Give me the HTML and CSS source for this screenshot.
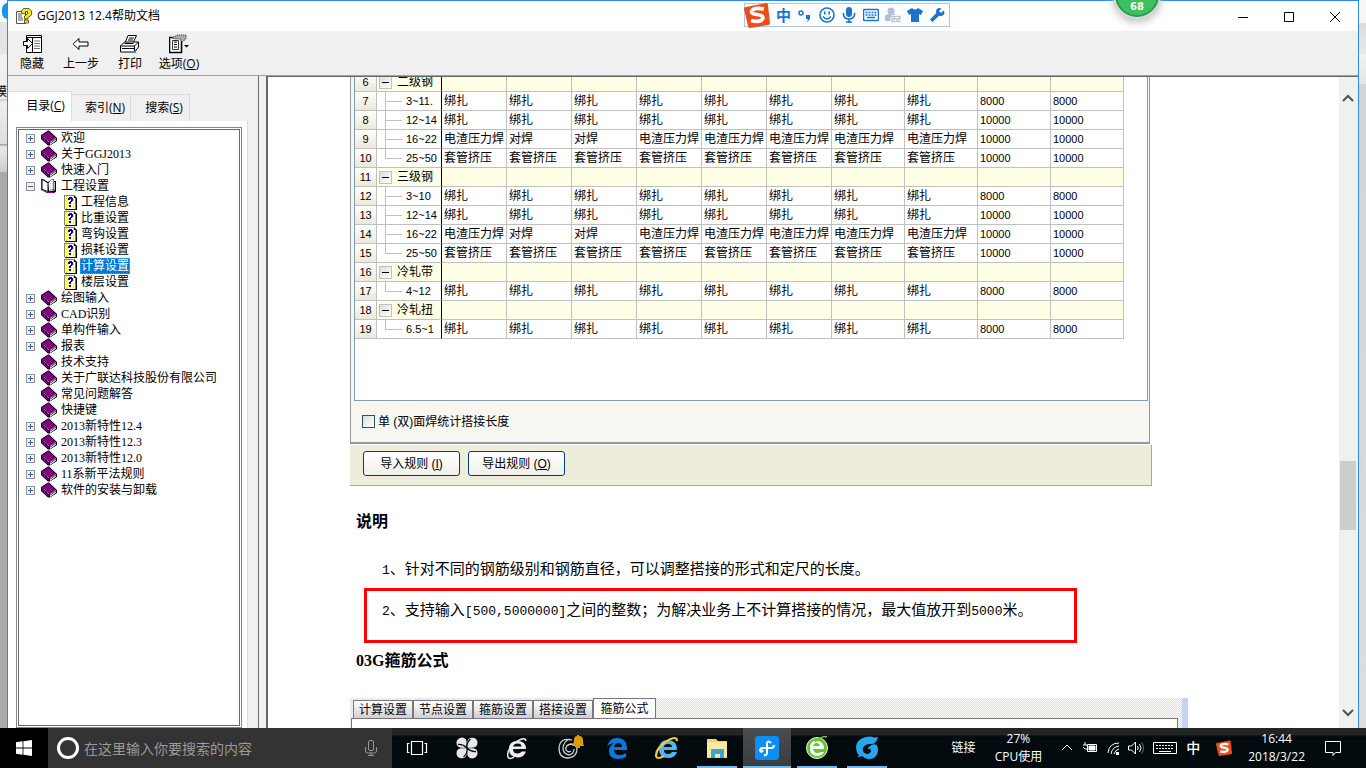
FILE: index.html
```html
<!DOCTYPE html>
<html lang="zh-CN">
<head>
<meta charset="utf-8">
<title>GGJ2013 12.4帮助文档</title>
<link rel="stylesheet" href="styles.css">
</head>
<body>
<svg class="defs" aria-hidden="true">
  <symbol id="book" viewBox="0 0 16 16">
    <path d="M0 5 7 .500h1L16 8v3l-7 4.500H7L0 9z" fill="#000"/>
    <path d="M1 5.200 7.500 1 15 8.200 8.500 12.800z" fill="#800080"/>
    <path d="M.700 6.500 8 13.500v1.500L.700 8.800z" fill="#800080"/>
    <path d="M9 13.500 15 9.500v1L9 15z" fill="#fff"/>
    <path d="M1.500 6 8.500 12.500" stroke="#ddd" stroke-dasharray="1 1" fill="none"/>
    <path d="M9 12.500 15 8.500" stroke="#aaa" fill="none"/>
  </symbol>
  <symbol id="open" viewBox="0 0 16 16">
    <path d="M1 1h1l5 3 4-3h2v2h2v11H7L1 12z" fill="#000"/>
    <path d="M0 1h1v11l6 2h7v1H6L0 12z" fill="#800080"/>
    <path d="M1.500 2 6.500 5v8L1.500 11z" fill="#fff"/>
    <path d="M7.500 5l3-3.500h2v9.500l-4.500 2z" fill="#fff"/>
    <path d="M9.500 5v7M11.500 3v8" stroke="#e8d800" stroke-dasharray="1 1"/>
    <path d="M13.500 4v8l-5 1" stroke="#bbb" fill="none"/>
  </symbol>
  <symbol id="topic" viewBox="0 0 13 15">
    <path d="M1 0h9l3 3v12H1z" fill="#000"/>
    <path d="M0 0h10v1H1v13H0z" fill="#808080"/>
    <path d="M1 1h9v2h1.500v11H1z" fill="#fffbc0"/>
    <path d="M2.500 1v13M9.500 2v12" stroke="#ffe800" stroke-dasharray="1 1"/>
    <path d="M4 5V3h1V2h3v1h1v3H8v1H7v2H5V7h1V6h1V4H6v1zM5 10h2v2H5z" fill="#0000e0"/>
  </symbol>
  <symbol id="sogou" viewBox="0 0 26 26">
    <path d="M2 5 22 1q2 0 2 2l2 18q0 2-2 2L6 26q-2 0-2-2L0 7q0-2 2-2z" fill="#ee4d1b"/>
    <path d="M20 7Q9 5 7.500 9.500C7 14 19.500 11 19 16Q17 21 7 18.500" fill="none" stroke="#fff" stroke-width="3.600"/>
  </symbol>
</svg>

<div class="desktop">
  <div class="behind behind-left"><span class="behind-dot"></span><span class="behind-char">模</span></div>

  <main class="window">
    <header class="titlebar">
      <svg class="app-icon" viewBox="0 0 16 16"><path d="M.500 3.500h9v12h-9z" fill="#fff" stroke="#555"/><path d="M2 6h4M2 8h4M2 10h5M2 12h5" stroke="#555"/><path d="M5.500 5V3l2-2.500h5.500l2.500 2.500v4l-3.500 2.500v1.500H8.500V8l3-2V3.500h-2V6zM8.500 12h4v3h-4z" fill="#ffe800" stroke="#222" stroke-width=".7"/></svg>
      <h1 class="title">GGJ2013 12.4帮助文档</h1>
      <div class="controls">
        <button aria-label="最小化"><svg viewBox="0 0 12 12"><path d="M1 6.500h10"/></svg></button>
        <button aria-label="最大化"><svg viewBox="0 0 12 12"><path d="M1.500 1.500h9v9h-9z"/></svg></button>
        <button aria-label="关闭"><svg viewBox="0 0 12 12"><path d="m1 1 10 10M11 1 1 11"/></svg></button>
      </div>
    </header>

    <nav class="toolbar">
      <button><svg viewBox="0 0 20 20"><path d="M4.500 1.500h15v17h-15z" fill="#fff" stroke="#000"/><path d="M4 3.500h16M10.500 4v15" stroke="#000"/><path d="M12 7h6M12 9.500h6M12 12h6M12 14.500h6" stroke="#777"/><path d="M1.500 7.500h4v-3l5 5-5 5v-3h-4z" fill="#fff" stroke="#000"/></svg><span>隐藏</span></button>
      <button><svg viewBox="0 0 20 20"><path d="m2 10 6-5.500v3.500h9v4H8v3.500z" fill="#fff" stroke="#000"/><path d="M2 9h1v2H2z" fill="#d00"/></svg><span>上一步</span></button>
      <button><svg viewBox="0 0 20 20"><path d="M5 9 8 1.500h8.500L13 9z" fill="#fff" stroke="#000"/><path d="M9 4h5M8 6h5" stroke="#000"/><path d="m.500 12 4-4h14v5l-4 5H.500z" fill="#fff" stroke="#000"/><path d="M.500 12h14v6M14.500 12l4-4M2 14.500h12" fill="none" stroke="#000"/><path d="m4 10 1-1h9l-1 1z"/><path d="M14 17h2v2h-2z" fill="#00bcd4"/></svg><span>打印</span></button>
      <button><svg viewBox="0 0 20 20"><path d="M.500 3.500h12v15H.500z" fill="#fff" stroke="#000" stroke-width="1.600"/><path d="M3.500 6.500h6v9h-6z" fill="none" stroke="#333"/><path d="M5 8h3M5 10.500h3M5 13h3" stroke="#000"/><path d="m3 4 5-3h9v4l-4 3-2-3H6z" fill="#aaa" stroke="#333" stroke-dasharray="1 1"/><path d="M15 11h5l-2.500 2.500z"/></svg><span>选项(<u>O</u>)</span></button>
    </nav>

    <div class="panes">
      <aside class="sidebar">
        <div class="side-tabs" role="tablist">
          <button class="side-tab active" role="tab" aria-selected="true">目录(<u>C</u>)</button>
          <button class="side-tab" role="tab">索引(<u>N</u>)</button>
          <button class="side-tab" role="tab">搜索(<u>S</u>)</button>
        </div>
        <div class="side-page">
          <ul class="tree">
            <li><button class="exp" aria-label="展开"></button><svg><use href="#book"/></svg><a href="#">欢迎</a></li>
            <li><button class="exp" aria-label="展开"></button><svg><use href="#book"/></svg><a href="#">关于GGJ2013</a></li>
            <li><button class="exp" aria-label="展开"></button><svg><use href="#book"/></svg><a href="#">快速入门</a></li>
            <li><button class="exp minus" aria-label="折叠"></button><svg><use href="#open"/></svg><a href="#">工程设置</a></li>
            <li class="child"><svg><use href="#topic"/></svg><a href="#">工程信息</a></li>
            <li class="child"><svg><use href="#topic"/></svg><a href="#">比重设置</a></li>
            <li class="child"><svg><use href="#topic"/></svg><a href="#">弯钩设置</a></li>
            <li class="child"><svg><use href="#topic"/></svg><a href="#">损耗设置</a></li>
            <li class="child"><svg><use href="#topic"/></svg><a href="#" class="selected">计算设置</a></li>
            <li class="child"><svg><use href="#topic"/></svg><a href="#">楼层设置</a></li>
            <li><button class="exp" aria-label="展开"></button><svg><use href="#book"/></svg><a href="#">绘图输入</a></li>
            <li><button class="exp" aria-label="展开"></button><svg><use href="#book"/></svg><a href="#">CAD识别</a></li>
            <li><button class="exp" aria-label="展开"></button><svg><use href="#book"/></svg><a href="#">单构件输入</a></li>
            <li><button class="exp" aria-label="展开"></button><svg><use href="#book"/></svg><a href="#">报表</a></li>
            <li class="leaf"><svg><use href="#book"/></svg><a href="#">技术支持</a></li>
            <li><button class="exp" aria-label="展开"></button><svg><use href="#book"/></svg><a href="#">关于广联达科技股份有限公司</a></li>
            <li class="leaf"><svg><use href="#book"/></svg><a href="#">常见问题解答</a></li>
            <li class="leaf"><svg><use href="#book"/></svg><a href="#">快捷键</a></li>
            <li><button class="exp" aria-label="展开"></button><svg><use href="#book"/></svg><a href="#">2013新特性12.4</a></li>
            <li><button class="exp" aria-label="展开"></button><svg><use href="#book"/></svg><a href="#">2013新特性12.3</a></li>
            <li><button class="exp" aria-label="展开"></button><svg><use href="#book"/></svg><a href="#">2013新特性12.0</a></li>
            <li><button class="exp" aria-label="展开"></button><svg><use href="#book"/></svg><a href="#">11系新平法规则</a></li>
            <li><button class="exp" aria-label="展开"></button><svg><use href="#book"/></svg><a href="#">软件的安装与卸载</a></li>
          </ul>
        </div>
      </aside>
      <div class="splitter"></div>

      <article class="doc">
        <div class="frame">
          <div class="grid-box">
            <table class="grid">
              <colgroup><col class="c-no"><col class="c-cell"><col class="c-cell"><col class="c-cell"><col class="c-cell"><col class="c-cell"><col class="c-cell"><col class="c-cell"><col class="c-wide"><col class="c-wide"><col class="c-wide"><col class="c-wide"></colgroup>
              <tbody>
              <tr class="group"><th>6</th><td><button class="fold" aria-label="折叠"></button>二级钢</td><td></td><td></td><td></td><td></td><td></td><td></td><td></td><td></td><td></td><td></td></tr>
              <tr><th>7</th><td class="sub">3~11.</td><td>绑扎</td><td>绑扎</td><td>绑扎</td><td>绑扎</td><td>绑扎</td><td>绑扎</td><td>绑扎</td><td>绑扎</td><td>8000</td><td>8000</td></tr>
              <tr><th>8</th><td class="sub">12~14</td><td>绑扎</td><td>绑扎</td><td>绑扎</td><td>绑扎</td><td>绑扎</td><td>绑扎</td><td>绑扎</td><td>绑扎</td><td>10000</td><td>10000</td></tr>
              <tr><th>9</th><td class="sub">16~22</td><td>电渣压力焊</td><td>对焊</td><td>对焊</td><td>电渣压力焊</td><td>电渣压力焊</td><td>电渣压力焊</td><td>电渣压力焊</td><td>电渣压力焊</td><td>10000</td><td>10000</td></tr>
              <tr><th>10</th><td class="sub last">25~50</td><td>套管挤压</td><td>套管挤压</td><td>套管挤压</td><td>套管挤压</td><td>套管挤压</td><td>套管挤压</td><td>套管挤压</td><td>套管挤压</td><td>10000</td><td>10000</td></tr>
              <tr class="group"><th>11</th><td><button class="fold" aria-label="折叠"></button>三级钢</td><td></td><td></td><td></td><td></td><td></td><td></td><td></td><td></td><td></td><td></td></tr>
              <tr><th>12</th><td class="sub">3~10</td><td>绑扎</td><td>绑扎</td><td>绑扎</td><td>绑扎</td><td>绑扎</td><td>绑扎</td><td>绑扎</td><td>绑扎</td><td>8000</td><td>8000</td></tr>
              <tr><th>13</th><td class="sub">12~14</td><td>绑扎</td><td>绑扎</td><td>绑扎</td><td>绑扎</td><td>绑扎</td><td>绑扎</td><td>绑扎</td><td>绑扎</td><td>10000</td><td>10000</td></tr>
              <tr><th>14</th><td class="sub">16~22</td><td>电渣压力焊</td><td>对焊</td><td>对焊</td><td>电渣压力焊</td><td>电渣压力焊</td><td>电渣压力焊</td><td>电渣压力焊</td><td>电渣压力焊</td><td>10000</td><td>10000</td></tr>
              <tr><th>15</th><td class="sub last">25~50</td><td>套管挤压</td><td>套管挤压</td><td>套管挤压</td><td>套管挤压</td><td>套管挤压</td><td>套管挤压</td><td>套管挤压</td><td>套管挤压</td><td>10000</td><td>10000</td></tr>
              <tr class="group"><th>16</th><td><button class="fold" aria-label="折叠"></button>冷轧带</td><td></td><td></td><td></td><td></td><td></td><td></td><td></td><td></td><td></td><td></td></tr>
              <tr><th>17</th><td class="sub last">4~12</td><td>绑扎</td><td>绑扎</td><td>绑扎</td><td>绑扎</td><td>绑扎</td><td>绑扎</td><td>绑扎</td><td>绑扎</td><td>8000</td><td>8000</td></tr>
              <tr class="group"><th>18</th><td><button class="fold" aria-label="折叠"></button>冷轧扭</td><td></td><td></td><td></td><td></td><td></td><td></td><td></td><td></td><td></td><td></td></tr>
              <tr><th>19</th><td class="sub last">6.5~1</td><td>绑扎</td><td>绑扎</td><td>绑扎</td><td>绑扎</td><td>绑扎</td><td>绑扎</td><td>绑扎</td><td>绑扎</td><td>8000</td><td>8000</td></tr>
              </tbody>
            </table>
          </div>
          <label class="check"><input type="checkbox">单 (双)面焊统计搭接长度</label>
        </div>
        <div class="actions">
          <button>导入规则 (<u>I</u>)</button>
          <button>导出规则 (<u>O</u>)</button>
        </div>

        <h2 class="note-title">说明</h2>
        <p class="note"><span class="num">1</span>、针对不同的钢筋级别和钢筋直径，可以调整搭接的形式和定尺的长度。</p>
        <p class="note boxed"><span class="num">2</span>、支持输入<span class="num">[500,5000000]</span>之间的整数；为解决业务上不计算搭接的情况，最大值放开到<span class="num">5000</span>米。</p>
        <h2 class="formula-title">03G箍筋公式</h2>

        <div class="shot">
          <div class="shot-tabs">
            <button>计算设置</button><button>节点设置</button><button>箍筋设置</button><button>搭接设置</button><button class="active">箍筋公式</button>
          </div>
          <div class="shot-page"></div>
        </div>
      </article>
      <div class="scrollbar">
        <svg viewBox="0 0 12 8"><path d="M1 7l5-5 5 5"/></svg>
        <div class="track"><div class="thumb"></div></div>
        <svg viewBox="0 0 12 8"><path d="M1 1l5 5 5-5"/></svg>
      </div>
    </div>
  </main>

  <div class="behind behind-right"></div>

  <div class="ime">
    <svg class="ime-logo"><use href="#sogou"/></svg>
    <b>中</b>
    <svg viewBox="0 0 16 16"><circle cx="4" cy="6" r="2" fill="none" stroke="#1b74c9" stroke-width="1.500"/><path d="M9 8h4v4l-3 3 1-3H9z"/></svg>
    <svg viewBox="0 0 16 16"><circle cx="8" cy="8" r="7" fill="none" stroke="#1b74c9" stroke-width="1.600"/><path d="M5 4.500h1.600v3H5zM9.400 4.500H11v3H9.400z"/><path d="M4 9.500q4 5 8 0" fill="none" stroke="#1b74c9" stroke-width="1.400"/></svg>
    <svg viewBox="0 0 16 16"><rect x="5" y="0" width="6" height="10" rx="3"/><path d="M2.500 6v2q1 4 5.500 4t5.500-4V6M8 12v4M5 15h6" fill="none" stroke="#1b74c9" stroke-width="1.600"/></svg>
    <svg viewBox="0 0 16 16"><rect x=".5" y="2.500" width="15" height="11" rx="1" fill="none" stroke="#1b74c9" stroke-width="1.500"/><path d="M2.500 5.500h11M2.500 8h11" stroke="#1b74c9" stroke-width="1.500" stroke-dasharray="2 1"/><path d="M4 10.500h8" stroke="#1b74c9" stroke-width="1.500"/></svg>
    <svg viewBox="0 0 16 16" class="dim"><circle cx="6" cy="4" r="3.500"/><path d="M0 14V9q1-2 4-2h6v7z"/><path d="M6.500 9.500H10V12H7v2.500h3.500M11.500 9.500H15V12h-3v2.500h3.500" fill="none" stroke="#fff" stroke-width="3"/><path d="M6.500 9.500H10V12H7v2.500h3.500M11.500 9.500H15V12h-3v2.500h3.500" fill="none" stroke="#b3bfd4" stroke-width="1.300"/></svg>
    <svg viewBox="0 0 16 16"><path d="M5 1q3 3 6 0l5 3-2 4-2-1v8H4V7L2 8 0 4z"/></svg>
    <svg viewBox="0 0 16 16"><path d="M14.500 3.500 12 6l-2-2 2.500-2.500Q8 0 7 4l.3 2L1 12.500 3.500 15 10 8.700q5 1 5.500-3.200z"/></svg>
  </div>
  <div class="ball">68</div>
</div>

<footer class="taskbar">
  <button class="start" aria-label="开始"><svg viewBox="0 0 16 16"><path d="M0 2.200 6.600 1.300v6.300H0zM7.400 1.200 16 0v7.600H7.400zM0 8.400h6.600v6.300L0 13.800zM7.400 8.400H16V16l-8.600-1.200z"/></svg></button>
  <label class="search">
    <span class="cortana"></span>
    <input type="text" placeholder="在这里输入你要搜索的内容" aria-label="搜索">
    <svg class="mic" viewBox="0 0 12 16"><rect x="3.500" y=".5" width="5" height="10" rx="1.500"/><path d="M.500 7v4q0 2 2 2h7q2 0 2-2V7M6 13v3M3 15.500h6"/></svg>
  </label>
  <div class="apps">
    <button aria-label="任务视图"><svg viewBox="0 0 24 24"><path d="M6.500 5.500h11v13h-11zM4.500 7.500h-2v9h2M19.500 7.500h2v9h-2" fill="none" stroke="#fff" stroke-width="1.200"/></svg></button>
    <button aria-label="花瓣"><svg viewBox="0 0 24 24" fill="#e8e8e8"><path d="M11.700 11.700H6Q1 11 1.500 6q1-4 5.500-4.500 5 .5 4.700 6zM12.300 11.700V6q.7-5 6.200-4.200 4 1 4 5 0 5-6 4.900zM12.300 12.300H18q5 .7 4.500 5.700-1 4-5.500 4.500-5-.5-4.700-6zM11.700 12.300V18q-.7 5-6.200 4.200-4-1-4-5 0-5 6-4.900z"/><path d="M3 8.500q5-.5 9 3.500-1-5 3.500-9M21 15.500q-5 .5-9-3.500 1 5-3.500 9" fill="none" stroke="#071015" stroke-width="1.300"/></svg></button>
    <button aria-label="浏览器"><svg viewBox="0 0 24 24"><path d="M21 13H8q0 4.500 4.500 4.500 3 0 4-2H21q-2 6-8.500 6Q4 21 4 13t8.500-8q8.500 0 8.500 8zM16.500 10.500q0-3-4-3t-4.500 3z" fill="#eee" fill-rule="evenodd"/><path d="M21 5q-1-5-10 1Q1 14 3 21q2 3 6 0" fill="none" stroke="#eee" stroke-width="1.500"/></svg></button>
    <button aria-label="广联达通知"><svg class="wide" viewBox="0 0 28 26"><path d="M16 5Q4 2 3 13q0 10 9 10 9-1 9-9-1-5-6-5-6 1-5 6 2 3 5 1M14 4Q7 7 7 13q0 6 6 7 5-1 5-6" fill="none" stroke="#ccc" stroke-width="1.300"/><path d="M16 11q2-2 2-6 0-4 3-4V0h2v1q4 0 4 4 0 4 1 6zM20 11h4v2h-4z" fill="#dc9d08"/></svg></button>
    <button aria-label="Edge"><svg viewBox="0 0 24 24"><path d="M2 11Q4 2 12 2q9 0 10 9v3H9q0 5 6 5 3 0 6-2v4q-3 2-8 2-9 0-9-8 0-5 5-8-6 1-7 4zm7 0h8q0-4-4-4-3 0-4 4z" fill="#0a78dc" fill-rule="evenodd"/></svg></button>
    <button aria-label="IE"><svg viewBox="0 0 24 24"><path d="M22 14H9q0 4 4 4 3 0 4-2h5q-2 6-9 6-9 0-9-9t9-9q9 0 9 10zm-5-3q0-3-4-3t-4 3z" fill="#4eb6f4" fill-rule="evenodd"/><path d="M22 5Q22-1 12 5 1 12 1 20q1 4 8 0" fill="none" stroke="#f3c82d" stroke-width="2.200"/></svg></button>
    <button class="running" aria-label="文件资源管理器"><svg viewBox="0 0 24 24"><path d="M2 3h9l2 2h9v17H2z" fill="#f3d276"/><path d="M2 6h20v15H2z" fill="#ffe79b"/><path d="M6 13h13v9h-4v-4h-5v4H6z" fill="#35a5dc"/></svg></button>
    <button class="running current" aria-label="帮助"><svg viewBox="0 0 24 24"><rect width="24" height="24" rx="3" fill="#0a8ff4"/><path d="M16 7q-3-3-4 0v10q-.5 3-3 2M5 15q0-3 3-3h8q3 0 3-3M5 15q2 2 3-1" fill="none" stroke="#fff" stroke-width="2"/></svg></button>
    <button class="running" aria-label="安全浏览器"><svg viewBox="0 0 24 24"><circle cx="12" cy="12" r="10.500" fill="#62c62c" stroke="#e8f7dc"/><path d="M19 13H8q1 4 4 4 3 0 4-1h3q-2 4-7 4-7 0-7-8t7-7q7 0 7 8zm-4-3q-1-3-3.500-3T8 10z" fill="#fff" fill-rule="evenodd"/><path d="M22 1q-4-2-12 5" stroke="#6cc93d" stroke-width="1.500" fill="none"/></svg></button>
    <button class="running" aria-label="广联达"><svg viewBox="0 0 24 24"><path d="M23 1q-3 1-7-.5Q2 1 1 11q0 5 3 8-1 2-2 2 4 0 5-1 5 5 12 2 6-5 3-13-4-2-7 1l-3 3q4-1 4 2-1 3-4 3-5-1-4-6 2-4 7-4 6 1 8-7z" fill="#25a7ee"/></svg></button>
  </div>
  <div class="tray">
    <span class="links">链接</span>
    <span class="stack cpu">27%<br>CPU使用</span>
    <svg class="w12" viewBox="0 0 12 16"><path d="m1 10 5-5 5 5"/></svg>
    <svg class="w16" viewBox="0 0 16 16"><path d="M5.500 4.500h9v7h-9zM1 5h4M3 2v3M1 7l2 2h2" /><path d="M7 6h6v4H7z" fill="#fff"/></svg>
    <svg class="w12" viewBox="0 0 12 16"><path d="M1 13Q2 3 12 3M4 14q1-7 8-8M7 14q1-4 5-5"/><path d="M9 12h3v3H9z" fill="#fff" stroke="none"/></svg>
    <svg class="w16" viewBox="0 0 16 16"><path d="M.500 6v4h3l4 4V2l-4 4zM9.500 6q1.500 2 0 4M11.500 4q3 4 0 8"/><path d="M13.500 2q4 6 0 12" opacity=".4"/></svg>
    <svg class="w24" viewBox="0 0 24 16"><path d="M.500 2.500h23v11H.500z"/><path d="M3 5.500h18M3 8.500h18" stroke-dasharray="2 1"/><path d="M6 11.500h12"/></svg>
    <span class="lang">中</span>
    <svg class="w16 tray-sogou"><use href="#sogou"/></svg>
    <span class="stack clock">16:44<br>2018/3/22</span>
    <svg class="w16" viewBox="0 0 16 16"><path d="M.500 1.500h15v11h-5l-2.500 3v-3H.500z"/></svg>
  </div>
</footer>
</body>
</html>
```
FILE: styles.css
```css
* { box-sizing: border-box; }

body {
  margin: 0;
  height: 100vh;
  display: flex;
  flex-direction: column;
  overflow: hidden;
  background: #fff;
  color: #000;
  font: 12px/16px "Open Sans", "Noto Sans CJK SC", sans-serif;
}

button {
  margin: 0;
  padding: 0;
  border: 0;
  background: none;
  color: inherit;
  font: inherit;
}

.defs { display: none; }

.desktop {
  position: relative;
  flex: 1;
  min-height: 0;
  display: flex;
}

/* Windows lying behind */
.behind {
  flex: none;
  width: 7px;
  overflow: hidden;
  background: linear-gradient(#fff 22px, #e4e4e4 22px, #e4e4e4 54px, #f2f2f2 54px, #ececec 99px, #c8c8c8 99px, #eee 102px, #ddd 144px, #999 144px, #eaeaea 147px, #ccc 172px, #aaa 172px);
}
.behind-dot {
  display: block;
  width: 16px;
  height: 16px;
  margin: 3px 0 0 2px;
  border-radius: 6px;
  background: #1296ee;
}
.behind-char {
  display: flex;
  justify-content: flex-end;
  margin-top: 65px;
}
.behind-right {
  background: linear-gradient(#f7f7f7 23px, #dcdcdc 23px, #e8e8e8 54px, #f2f2f2 54px, #e4e4e4 84px, #d5d5d5 84px, #ddd);
}

/* Help window */
.window {
  flex: 1;
  min-width: 0;
  display: flex;
  flex-direction: column;
  border: solid #2c8ae8;
  border-width: 1px 1px 0;
  background: #f0f0f0;
}
.titlebar {
  flex: none;
  display: flex;
  align-items: center;
  height: 30px;
  padding-left: 8px;
  background: #fff;
}
.app-icon { width: 16px; height: 16px; }
.title {
  flex: 1;
  margin: 0 0 0 5px;
  font-size: 12px;
  font-weight: 400;
}
.controls { display: flex; align-self: stretch; }
.controls button { width: 46px; }
.controls svg {
  width: 12px;
  height: 12px;
  vertical-align: middle;
  fill: none;
  stroke: #000;
}

.toolbar {
  flex: none;
  display: flex;
  height: 44px;
}
.toolbar button {
  width: 49px;
  padding-right: 1px;
  white-space: nowrap;
}
.toolbar svg {
  display: block;
  width: 20px;
  height: 20px;
  margin: 0 auto 2px;
}

.panes {
  flex: 1;
  min-height: 0;
  display: flex;
  border-top: 1px solid #a0a0a0;
}

/* Contents pane */
.sidebar {
  flex: none;
  width: 250px;
  padding: 15px 10px 0 0;
  display: flex;
  flex-direction: column;
}
.side-tabs {
  display: flex;
  align-items: flex-end;
}
.side-tab {
  width: 59px;
  height: 27px;
  padding-left: 8px;
  border: solid #dcdcdc;
  border-width: 1px 1px 0 0;
}
.side-tab.active {
  width: 64px;
  height: 30px;
  padding-left: 12px;
  padding-bottom: 2px;
  background: #fff;
}
.side-page {
  flex: 1;
  min-height: 0;
  padding: 6px 5px 0 8px;
  display: flex;
  border-right: 1px solid #dcdcdc;
  background: #fff;
}
.tree {
  flex: 1;
  margin: 0;
  padding: 2px 0 0 8px;
  overflow: hidden;
  list-style: none;
  border: 1px solid #828790;
  outline: 1px solid #696969;
  outline-offset: -3px;
  font-family: "Liberation Serif", "Noto Sans CJK SC", serif;
}
.tree li {
  display: flex;
  align-items: center;
  height: 16px;
}
.tree svg { flex: none; width: 16px; height: 16px; }
.tree a {
  margin-left: 3px;
  padding: 0 1px;
  line-height: 16px;
  color: #000;
  text-decoration: none;
  white-space: nowrap;
}
.tree .leaf { padding-left: 16px; }
.tree .child { padding-left: 39px; }
.tree .child svg { width: 13px; height: 15px; }
.tree a.selected {
  background: #0078d7;
  color: #fff;
  outline: 1px dotted #e08030;
  outline-offset: -1px;
}
.exp {
  flex: none;
  width: 9px;
  height: 9px;
  margin: 0 6px 0 1px;
  border: 1px solid #919191;
  background:
    linear-gradient(#3060b0, #3060b0) center / 5px 1px no-repeat,
    linear-gradient(#3060b0, #3060b0) center / 1px 5px no-repeat,
    #f5f5f5;
}
.exp.minus {
  background: linear-gradient(#3060b0, #3060b0) center / 5px 1px no-repeat, #f5f5f5;
}
.splitter {
  flex: none;
  width: 10px;
  border: solid;
  border-width: 0 2px 0 1px;
  border-color: #a0a0a0 #696969;
}

/* Topic */
.doc {
  flex: 1;
  min-width: 0;
  overflow: hidden;
  padding: 0 151px 0 82px;
  border-top: 1px solid #696969;
  background: #fff;
  font-family: "Liberation Sans", "Noto Sans CJK SC", sans-serif;
  white-space: nowrap;
}
.frame {
  margin: -4px 38px 0 0;
  padding: 0 1px 0 3px;
  border: solid #919b9c;
  border-width: 0 1px 2px;
  background: #f7f6f0;
}
.grid-box {
  padding: 0 23px 61px 0;
  border: solid #7f9db9;
  border-width: 0 1px 1px;
  background: #fff;
}
.grid {
  width: 100%;
  table-layout: fixed;
  border-collapse: separate;
  border-spacing: 0;
}
.c-no { width: 22px; }
.c-cell { width: 65px; }
.c-wide { width: 73px; }
.grid tr { height: 19px; }
.grid th,
.grid td {
  height: 19px;
  padding: 0 0 0 2px;
  overflow: hidden;
  border: solid #c0c0c0;
  border-width: 0 1px 1px 0;
  font-weight: 400;
  line-height: 16px;
  text-align: left;
}
.grid th {
  padding: 0;
  background: linear-gradient(#fff, #ece9d8);
  font-size: 11px;
  text-align: center;
}
.grid td:nth-child(2) { border-right-color: #000; }
.grid td:nth-child(n+11) { font-size: 11px; }
.grid .group td { background: #ffffe5; }
.grid .sub {
  padding-left: 29px;
  font-size: 11px;
  background:
    linear-gradient(#c0c0c0, #c0c0c0) 8px 0 / 1px 100% no-repeat,
    linear-gradient(#c0c0c0, #c0c0c0) 8px 9px / 17px 1px no-repeat;
}
.grid .sub.last {
  background:
    linear-gradient(#c0c0c0, #c0c0c0) 8px 0 / 1px 9px no-repeat,
    linear-gradient(#c0c0c0, #c0c0c0) 8px 9px / 17px 1px no-repeat;
}
.fold {
  width: 13px;
  height: 13px;
  margin-right: 5px;
  border: 1px solid #c0c0c0;
  vertical-align: middle;
  background:
    linear-gradient(#000, #000) center / 7px 1px no-repeat,
    linear-gradient(135deg, #ddd, #fff);
}
.check {
  display: flex;
  align-items: center;
  height: 41px;
  padding-left: 8px;
}
.check input {
  appearance: none;
  width: 13px;
  height: 13px;
  margin: 0 3px 0 0;
  border: 1px solid #1c5180;
  background: linear-gradient(135deg, #dcdcd7, #fff);
}
.actions {
  display: flex;
  gap: 8px;
  height: 41px;
  margin: 1px 36px 0 0;
  padding: 6px 13px;
  border: solid #aca899;
  border-width: 0 1px 1px 0;
  background: #eeeddc;
}
.actions button {
  width: 97px;
  height: 25px;
  border: 1px solid #003c74;
  border-radius: 3px;
  background: linear-gradient(#fff, #f0f0ea);
}

.note-title,
.formula-title {
  font-size: 16px;
  line-height: 24px;
  font-weight: 700;
}
.note-title { margin: 24px 0 23px 6px; }
.formula-title {
  margin: 6px 0 25px 6px;
  font-family: "Liberation Serif", "Noto Sans CJK SC", serif;
}
.note {
  margin: 0 0 5px 32px;
  font-size: 15px;
  line-height: 24px;
}
.note.boxed {
  margin: 0 111px 0 14px;
  padding: 7px 0 16px 15px;
  border: 3px solid #f00;
}
.num { font-family: "Liberation Mono", monospace; font-size: 13px; }

.shot {
  padding: 0 4px 0 1px;
  border-right: 6px solid #c4d4f4;
  background: repeating-conic-gradient(#e2dee6 0 25%, #f8faf4 0 50%) 0 0 / 2px 2px;
}
.shot-tabs {
  display: flex;
  align-items: flex-end;
  height: 20px;
  padding-left: 2px;
}
.shot-tabs button {
  width: 60px;
  height: 18px;
  border: 1px solid #7b7484;
  border-bottom: 0;
  background: linear-gradient(#fff, #d0d0d0);
}
.shot-tabs .active {
  width: 63px;
  height: 20px;
  background: #fff;
}
.shot-page {
  height: 40px;
  border: 1px solid #7b7484;
  background: #fff;
}

.scrollbar {
  flex: none;
  width: 19px;
  padding: 17px 2px 11px 0;
  display: flex;
  flex-direction: column;
  align-items: center;
  border-top: 1px solid #696969;
}
.scrollbar svg {
  width: 12px;
  height: 8px;
  fill: none;
  stroke: #505050;
  stroke-width: 2;
}
.track { flex: 1; align-self: stretch; padding: 359px 0 0 1px; }
.thumb { height: 69px; background: #cdcdcd; }

/* Floating input bar and monitor ball */
.ime {
  position: absolute;
  top: 3px;
  left: 744px;
  display: flex;
  align-items: center;
  gap: 6px;
  height: 24px;
  padding-right: 4px;
  border: 1px solid #b4c4dc;
  background: #fcfdff;
  color: #1b74c9;
  font-size: 15px;
}
.ime svg { width: 16px; height: 16px; fill: #1b74c9; }
.ime .ime-logo { width: 26px; height: 26px; margin-left: -1px; }
.ime .dim { fill: #b3bfd4; }
.ball {
  position: absolute;
  top: -29px;
  right: 205px;
  width: 48px;
  height: 48px;
  padding-top: 26px;
  border: 2px solid #d8d8d8;
  border-radius: 50%;
  background: #3cc15c;
  box-shadow: inset 0 0 0 2px #2e9a50, 0 3px 8px #bbb;
  color: #fff;
  font: bold 10px/16px "DejaVu Sans", sans-serif;
  text-align: center;
}

/* Taskbar */
.taskbar {
  flex: none;
  display: flex;
  height: 40px;
  background: linear-gradient(#252525 7px, #0c1c2c 7px, #020a0e 9px);
  color: #fff;
}
.start { width: 48px; background: #000; }
.start svg { width: 16px; height: 16px; fill: #fff; vertical-align: middle; }
.search {
  flex: none;
  display: flex;
  align-items: center;
  width: 344px;
  padding: 0 15px 0 9px;
  background: #333;
}
.cortana {
  width: 22px;
  height: 22px;
  border: 3px solid #fff;
  border-radius: 50%;
}
.search input {
  flex: 1;
  min-width: 0;
  margin-left: 5px;
  padding: 0;
  border: 0;
  outline: 0;
  background: none;
  color: #fff;
  font: 14px/20px "Noto Sans CJK SC", sans-serif;
}
.search input::placeholder { color: #999; opacity: 1; }
.mic { width: 12px; height: 16px; fill: none; stroke: #999; }
.apps { display: flex; }
.apps button { width: 50px; }
.apps .running {
  background: linear-gradient(#76b9ed, #76b9ed) bottom / 40px 2px no-repeat;
}
.apps .current {
  background:
    linear-gradient(#76b9ed, #76b9ed) bottom / 48px 2px no-repeat,
    linear-gradient(#4a4d50, #383d40) center / 48px 100% no-repeat;
}
.apps svg { width: 24px; height: 24px; vertical-align: middle; }
.apps .wide { width: 28px; height: 26px; margin-left: 6px; }
.tray {
  display: flex;
  align-items: center;
  gap: 9px;
  margin-left: auto;
  padding-right: 25px;
}
.tray svg { height: 16px; fill: none; stroke: #fff; stroke-width: 1; }
.w12 { width: 12px; }
.w16 { width: 16px; }
.w24 { width: 24px; }
.tray .tray-sogou { margin: 0 7px; stroke: none; }
.lang { width: 14px; font-size: 14px; font-weight: 500; }
.stack { line-height: 18px; text-align: center; }
.cpu { margin: 0 10px; }
.clock { margin-right: 11px; }
```
